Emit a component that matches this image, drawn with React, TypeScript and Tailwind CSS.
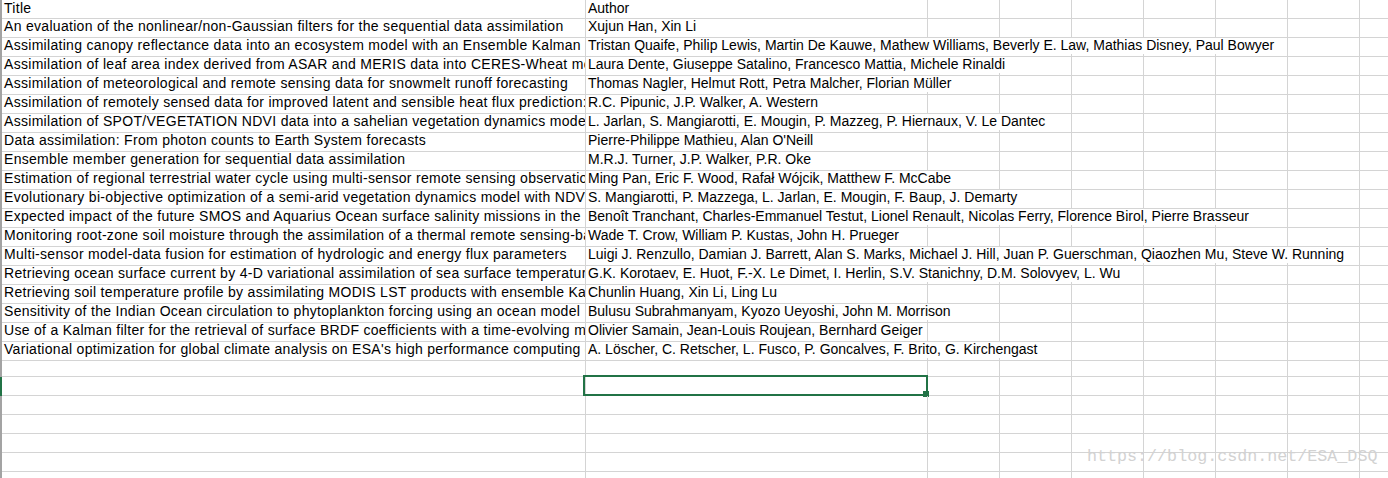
import React from "react";

// [title, authors, how many columns the author text runs across]
const ROWS: [string, string, number][] = [
  ["An evaluation of the nonlinear/non-Gaussian filters for the sequential data assimilation", "Xujun Han, Xin Li", 1],
  ["Assimilating canopy reflectance data into an ecosystem model with an Ensemble Kalman Filter", "Tristan Quaife, Philip Lewis, Martin De Kauwe, Mathew Williams, Beverly E. Law, Mathias Disney, Paul Bowyer", 6],
  ["Assimilation of leaf area index derived from ASAR and MERIS data into CERES-Wheat model to map wheat yield", "Laura Dente, Giuseppe Satalino, Francesco Mattia, Michele Rinaldi", 3],
  ["Assimilation of meteorological and remote sensing data for snowmelt runoff forecasting", "Thomas Nagler, Helmut Rott, Petra Malcher, Florian Müller", 2],
  ["Assimilation of remotely sensed data for improved latent and sensible heat flux prediction: A comparative synthetic study", "R.C. Pipunic, J.P. Walker, A. Western", 1],
  ["Assimilation of SPOT/VEGETATION NDVI data into a sahelian vegetation dynamics model", "L. Jarlan, S. Mangiarotti, E. Mougin, P. Mazzeg, P. Hiernaux, V. Le Dantec", 3],
  ["Data assimilation: From photon counts to Earth System forecasts", "Pierre-Philippe Mathieu, Alan O'Neill", 1],
  ["Ensemble member generation for sequential data assimilation", "M.R.J. Turner, J.P. Walker, P.R. Oke", 1],
  ["Estimation of regional terrestrial water cycle using multi-sensor remote sensing observations and data assimilation", "Ming Pan, Eric F. Wood, Rafał Wójcik, Matthew F. McCabe", 2],
  ["Evolutionary bi-objective optimization of a semi-arid vegetation dynamics model with NDVI and σ0 satellite data", "S. Mangiarotti, P. Mazzega, L. Jarlan, E. Mougin, F. Baup, J. Demarty", 3],
  ["Expected impact of the future SMOS and Aquarius Ocean surface salinity missions in the Mercator Ocean operational systems", "Benoît Tranchant, Charles-Emmanuel Testut, Lionel Renault, Nicolas Ferry, Florence Birol, Pierre Brasseur", 6],
  ["Monitoring root-zone soil moisture through the assimilation of a thermal remote sensing-based soil moisture proxy", "Wade T. Crow, William P. Kustas, John H. Prueger", 1],
  ["Multi-sensor model-data fusion for estimation of hydrologic and energy flux parameters", "Luigi J. Renzullo, Damian J. Barrett, Alan S. Marks, Michael J. Hill, Juan P. Guerschman, Qiaozhen Mu, Steve W. Running", 7],
  ["Retrieving ocean surface current by 4-D variational assimilation of sea surface temperature images", "G.K. Korotaev, E. Huot, F.-X. Le Dimet, I. Herlin, S.V. Stanichny, D.M. Solovyev, L. Wu", 4],
  ["Retrieving soil temperature profile by assimilating MODIS LST products with ensemble Kalman filter", "Chunlin Huang, Xin Li, Ling Lu", 1],
  ["Sensitivity of the Indian Ocean circulation to phytoplankton forcing using an ocean model", "Bulusu Subrahmanyam, Kyozo Ueyoshi, John M. Morrison", 2],
  ["Use of a Kalman filter for the retrieval of surface BRDF coefficients with a time-evolving model based on the ECOCLIMAP land cover classification", "Olivier Samain, Jean-Louis Roujean, Bernhard Geiger", 1],
  ["Variational optimization for global climate analysis on ESA's high performance computing grid", "A. Löscher, C. Retscher, L. Fusco, P. Goncalves, F. Brito, G. Kirchengast", 3],
];

const SPAN = ["", "col-span-1", "col-span-2", "col-span-3", "col-span-4", "col-span-5", "col-span-6", "col-span-7"];
const EMPTY_ROWS = 7;
const SELECTED = ROWS.length + 2; // row index of the selected cell

const cell = "border-r border-b border-[#d4d4d4]";

function Row({ title, author, span, index }: { title: string; author: string; span: number; index: number }) {
  const selected = index === SELECTED;
  const header = index === 0;
  return (
    <div className={`flex ${header ? "h-[16px]" : "h-[19px]"}`}>
      <div className={`w-[2px] shrink-0 ${selected ? "bg-[#217346]" : "bg-[#a3a3a3]"}`} />
      <div className="grid grid-cols-[584px_342px_repeat(7,72px)]">
        <div
          className={`${cell} overflow-hidden whitespace-nowrap pl-[2px] tracking-[0.3px] ${
            header ? "-mt-[1px] leading-[18px]" : "leading-[21px]"
          }`}
        >
          {title}
        </div>
        <div className={`${cell} ${SPAN[span]} relative whitespace-nowrap pl-[2px] ${header ? "leading-[18px]" : "leading-[21px]"}`}>
          <span className={header ? "relative -top-[1px]" : ""}>{author}</span>
          {selected && (
            <div className="absolute -top-[2px] -left-[3px] -right-[1px] -bottom-[1px] border-2 border-[#217346]">
              <div className="absolute -right-[3px] -bottom-[3px] h-[6px] w-[6px] bg-[#217346]" />
            </div>
          )}
        </div>
        {Array.from({ length: 8 - span }).map((_, i) => (
          <div key={i} className={cell} />
        ))}
      </div>
    </div>
  );
}

export default function App() {
  const all: [string, string, number][] = [
    ["Title", "Author", 1],
    ...ROWS,
    ...Array.from({ length: EMPTY_ROWS }, () => ["", "", 1] as [string, string, number]),
  ];
  return (
    <div className="relative h-[478px] w-[1388px] overflow-hidden bg-white text-[14px] text-black [font-family:'Liberation_Sans',Arial,sans-serif]">
      {all.map(([t, a, s], i) => (
        <Row key={i} title={t} author={a} span={s} index={i} />
      ))}
      <div className="absolute left-[1087px] top-[447px] text-[16.7px] leading-[20px] text-[#d2d2d2] [font-family:'Liberation_Mono',monospace]">
        https://blog.csdn.net/ESA_DSQ
      </div>
    </div>
  );
}
